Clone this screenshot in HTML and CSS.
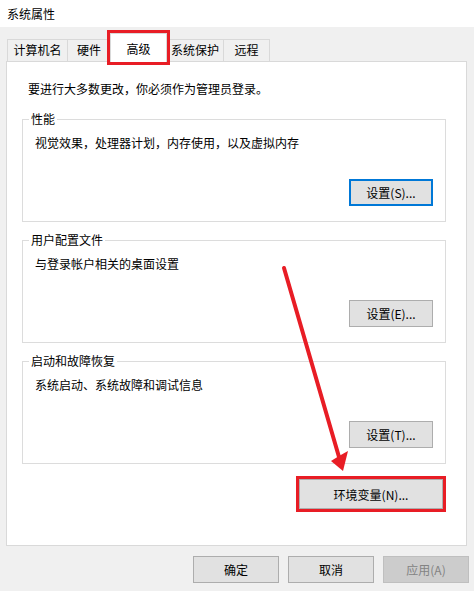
FILE: index.html
```html
<!DOCTYPE html>
<html lang="zh-CN">
<head>
  <meta charset="utf-8" />
  <title>系统属性</title>
  <link rel="stylesheet" href="styles.css">
</head>
<body>
  <div class="titlebar">系统属性</div>

  <div class="tabs">
    <div class="tab t1">计算机名</div>
    <div class="tab t2">硬件</div>
    <div class="tab t3 active mark">高级</div>
    <div class="tab t4">系统保护</div>
    <div class="tab t5">远程</div>
  </div>

  <div class="panel">
    <p class="intro">要进行大多数更改，你必须作为管理员登录。</p>

    <fieldset class="group">
      <legend>性能</legend>
      <p>视觉效果，处理器计划，内存使用，以及虚拟内存</p>
      <div class="row"><button class="btn default">设置(S)...</button></div>
    </fieldset>

    <fieldset class="group">
      <legend>用户配置文件</legend>
      <p>与登录帐户相关的桌面设置</p>
      <div class="row"><button class="btn">设置(E)...</button></div>
    </fieldset>

    <fieldset class="group">
      <legend>启动和故障恢复</legend>
      <p>系统启动、系统故障和调试信息</p>
      <div class="row"><button class="btn">设置(T)...</button></div>
    </fieldset>

    <div class="env-row"><button class="btn env mark">环境变量(N)...</button></div>
  </div>

  <div class="footer">
    <button class="btn wide">确定</button>
    <button class="btn wide">取消</button>
    <button class="btn wide" disabled>应用(A)</button>
  </div>

  <!-- red pointer from the groups down to the env button -->
  <svg class="arrow" width="474" height="591" viewBox="0 0 474 591">
    <line x1="284" y1="268" x2="339" y2="457" stroke="#e81d25" stroke-width="4" stroke-linecap="round"/>
    <polygon points="343,471 331,461 339,456 348,451" fill="#e81d25"/>
  </svg>
</body>
</html>
```

FILE: styles.css
```css
* {
  box-sizing: border-box;
}

body {
  margin: 0;
  width: 474px;
  height: 591px;
  overflow: hidden;
  position: relative;
  background: #f0f0f0;
  color: #000;
  font-family: "Noto Sans CJK SC", "Noto Sans", sans-serif;
  font-size: 12px;
}

.titlebar {
  height: 27px;
  line-height: 27px;
  padding-left: 7px;
  background: #fff;
}

/* tab strip */
.tabs {
  display: flex;
  align-items: flex-end;
  padding: 6px 0 0 7px;
}

.tab {
  height: 22px;
  line-height: 20px;
  text-align: center;
  border: 1px solid #d9d9d9;
  border-bottom: none;
  background: #f0f0f0;
  margin-left: -1px;
}

.tab.t1 { width: 61px; margin-left: 0; }
.tab.t2 { width: 44px; }
.tab.t3 { width: 57px; }
.tab.t4 { width: 58px; }
.tab.t5 { width: 47px; }

.tab.active {
  position: relative;
  z-index: 1;
  height: 29px;
  margin-bottom: -1px;
  padding-top: 5px;
  background: #fff;
}

.mark {
  outline: 3px solid #e81d25;
  outline-offset: -1px;
}

.tab.active.mark {
  outline-offset: 0;
}

/* white page under the tabs */
.panel {
  height: 485px;
  margin: 0 7px 0 6px;
  border: 1px solid #d9d9d9;
  background: #fff;
  padding: 19px 20px 0 15px;
}

.intro {
  margin: 0 0 14px 6px;
  line-height: 16px;
}

.group {
  margin: 0 0 10px 0;
  padding: 8px 12px 15px 12px;
  border: 1px solid #dcdcdc;
  min-width: 0;
}

.group legend {
  padding: 0 2px;
  margin-left: -6px;
  line-height: 16px;
}

.group p {
  margin: 0;
  line-height: 16px;
}

.group .row {
  display: flex;
  justify-content: flex-end;
  margin-top: 28px;
}

.btn {
  width: 84px;
  height: 27px;
  padding: 0;
  border: 1px solid #adadad;
  border-radius: 0;
  background: #e1e1e1;
  color: #000;
  font: inherit;
  text-align: center;
}

.btn.default {
  border: 2px solid #0078d7;
}

.btn:disabled {
  background: #cccccc;
  border-color: #bfbfbf;
  color: #838383;
}

.env-row {
  display: flex;
  justify-content: flex-end;
  margin-top: 15px;
  padding-right: 3px;
}

.btn.env {
  width: 144px;
  height: 30px;
  outline-offset: 0;
}

.footer {
  display: flex;
  justify-content: flex-end;
  gap: 9px;
  padding: 10px 5px 0 0;
}

.btn.wide {
  width: 86px;
}

.arrow {
  position: absolute;
  top: 0;
  left: 0;
  pointer-events: none;
}
```
